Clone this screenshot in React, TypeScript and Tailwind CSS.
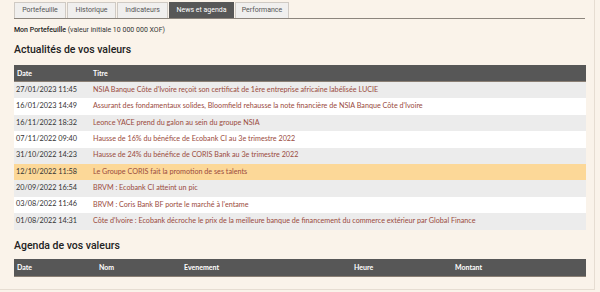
import React from "react";

const news: [string, string, boolean?][] = [
  ["27/01/2023 11:45", "NSIA Banque Côte d'Ivoire reçoit son certificat de 1ère entreprise africaine labélisée LUCIE"],
  ["16/01/2023 14:49", "Assurant des fondamentaux solides, Bloomfield rehausse la note financière de NSIA Banque Côte d'Ivoire"],
  ["16/11/2022 18:32", "Leonce YACE prend du galon au sein du groupe NSIA"],
  ["07/11/2022 09:40", "Hausse de 16% du bénéfice de Ecobank CI au 3e trimestre 2022"],
  ["31/10/2022 14:23", "Hausse de 24% du bénéfice de CORIS Bank au 3e trimestre 2022"],
  ["12/10/2022 11:58", "Le Groupe CORIS fait la promotion de ses talents", true],
  ["20/09/2022 16:54", "BRVM : Ecobank CI atteint un pic"],
  ["03/08/2022 11:46", "BRVM : Coris Bank BF porte le marché à l'entame"],
  ["01/08/2022 14:31", "Côte d'Ivoire : Ecobank décroche le prix de la meilleure banque de financement du commerce extérieur par Global Finance"],
];

const tabs = [
  { l: "Portefeuille", w: "w-[52px]" },
  { l: "Historique", w: "w-[49px]" },
  { l: "Indicateurs", w: "w-[51px]" },
  { l: "News et agenda", w: "w-[65px]", a: true },
  { l: "Performance", w: "w-[54px]" },
];

export default function App() {
  return (
    <div className="w-[600px] h-[292px] bg-[#faf3ea] overflow-hidden">
      <div className="w-[595px] h-[290px] border-r border-b border-[#e6ddd2] pl-[14px] pr-[9px] font-['Roboto',sans-serif]">
        <div className="flex items-end h-[19px] border-b border-[#8c857d] gap-px pt-[2px]">
          {tabs.map((t) => (
            <div
              key={t.l}
              className={`${t.w} h-[16px] flex items-center justify-center text-[7px] border border-b-0 ${
                t.a ? "bg-[#575757] text-white border-[#575757]" : "bg-[#f0efee] text-[#555] border-[#cfcac4]"
              }`}
            >
              {t.l}
            </div>
          ))}
        </div>
        <div className="text-[7px] text-[#333] mt-[7px] leading-[9px]">
          <span className="font-medium text-[#222]">Mon Portefeuille</span> (valeur initiale 10 000 000 XOF)
        </div>
        <div className="text-[10.5px] font-medium text-[#222] mt-[8px] leading-[13px]">Actualités de vos valeurs</div>
        <div className="mt-[9px] w-[572px] font-['Lato',sans-serif]">
          <div className="flex h-[17px] items-center bg-[#575757] text-white font-bold text-[7px] border-b border-[#8a7f74]">
            <div className="w-[79px] pl-[3px]">Date</div>
            <div>Titre</div>
          </div>
          {news.map(([d, t, h], i) => (
            <div
              key={d}
              className={`flex h-[16.4px] items-center ${
                h ? "bg-[#fcd898]" : i % 2 === 0 ? "bg-[#ececec]" : "bg-white"
              }`}
            >
              <div className="w-[79px] pl-[2px] text-[#333] text-[7.3px]">{d}</div>
              <div className="text-[#9a4b3d] whitespace-nowrap text-[7.2px]">{t}</div>
            </div>
          ))}
        </div>
        <div className="text-[10.5px] font-medium text-[#222] mt-[9px] leading-[13px]">Agenda de vos valeurs</div>
        <div className="mt-[7px] w-[572px] flex h-[18px] items-center bg-[#575757] text-white font-bold text-[7px] font-['Lato',sans-serif] border-b border-[#8a7f74]">
          <div className="w-[85px] pl-[3px]">Date</div>
          <div className="w-[85px]">Nom</div>
          <div className="w-[170px]">Evenement</div>
          <div className="w-[101px]">Heure</div>
          <div>Montant</div>
        </div>
      </div>
    </div>
  );
}
